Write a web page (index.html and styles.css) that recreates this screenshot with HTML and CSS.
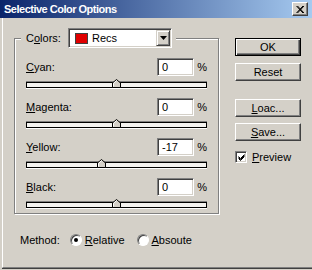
FILE: index.html
```html
<!DOCTYPE html>
<html lang="en">
<head>
    <meta charset="UTF-8">
    <meta name="viewport" content="width=device-width, initial-scale=1.0">
    <title>Selective Color Options</title>
    <link rel="stylesheet" href="styles.css">
</head>
<body>
    <div class="window">
        <div class="titlebar">
            <span class="title">Selective Color Options</span>
            <span class="close">
                <svg width="8" height="7" viewBox="0 0 8 7"><path d="M0.5 0 L7 7 M1.5 0 L8 7 M7 0 L0.5 7 M8 0 L1.5 7" stroke="#000" stroke-width="1"/></svg>
            </span>
        </div>
        <div class="content">
            <div class="main">
                <fieldset class="group">
                    <legend class="colors">
                        <span class="colors-lbl">C<u>o</u>lors:</span>
                        <span class="select">
                            <span class="swatch"></span>
                            <span class="sel-text">Recs</span>
                            <span class="arrow"><svg width="7" height="4" viewBox="0 0 7 4"><path d="M0 0 H7 L3.5 4 Z" fill="#000"/></svg></span>
                        </span>
                    </legend>

                    <div class="row">
                        <div class="row-top"><span class="lbl"><u>C</u>yan:</span><input class="num" type="text" value="0" readonly><span class="pct">%</span></div>
                        <div class="track"><span class="thumb" style="left: 85px"><svg width="9" height="9" viewBox="0 0 9 9"><path d="M0.5 8.5 V4 L4.5 0.5 L8.5 4 V8.5 Z" fill="#d4d0c8" stroke="#000"/><path d="M1.5 7.5 V4.3 L4.5 1.7" fill="none" stroke="#fff"/></svg></span></div>
                    </div>
                    <div class="row">
                        <div class="row-top"><span class="lbl"><u>M</u>agenta:</span><input class="num" type="text" value="0" readonly><span class="pct">%</span></div>
                        <div class="track"><span class="thumb" style="left: 85px"><svg width="9" height="9" viewBox="0 0 9 9"><path d="M0.5 8.5 V4 L4.5 0.5 L8.5 4 V8.5 Z" fill="#d4d0c8" stroke="#000"/><path d="M1.5 7.5 V4.3 L4.5 1.7" fill="none" stroke="#fff"/></svg></span></div>
                    </div>
                    <div class="row">
                        <div class="row-top"><span class="lbl"><u>Y</u>ellow:</span><input class="num" type="text" value="-17" readonly><span class="pct">%</span></div>
                        <div class="track"><span class="thumb" style="left: 70px"><svg width="9" height="9" viewBox="0 0 9 9"><path d="M0.5 8.5 V4 L4.5 0.5 L8.5 4 V8.5 Z" fill="#d4d0c8" stroke="#000"/><path d="M1.5 7.5 V4.3 L4.5 1.7" fill="none" stroke="#fff"/></svg></span></div>
                    </div>
                    <div class="row">
                        <div class="row-top"><span class="lbl"><u>B</u>lack:</span><input class="num" type="text" value="0" readonly><span class="pct">%</span></div>
                        <div class="track"><span class="thumb" style="left: 85px"><svg width="9" height="9" viewBox="0 0 9 9"><path d="M0.5 8.5 V4 L4.5 0.5 L8.5 4 V8.5 Z" fill="#d4d0c8" stroke="#000"/><path d="M1.5 7.5 V4.3 L4.5 1.7" fill="none" stroke="#fff"/></svg></span></div>
                    </div>
                </fieldset>

                <div class="method">
                    <span class="method-lbl">Method:</span>
                    <span class="radio checked"></span><span class="radio-text"><u>R</u>elative</span>
                    <span class="radio"></span><span class="radio-text"><u>A</u>bsoute</span>
                </div>
            </div>

            <div class="side">
                <button class="btn default">OK</button>
                <button class="btn reset">Reset</button>
                <button class="btn load"><u>L</u>oac...</button>
                <button class="btn save"><u>S</u>ave...</button>
                <div class="preview">
                    <span class="check"><svg width="7" height="7" viewBox="0 0 7 7"><path d="M0.5 2.5 L2.5 4.5 L6.5 0.5 M0.5 3.5 L2.5 5.5 L6.5 1.5 M0.5 4.5 L2.5 6.5 L6.5 2.5" fill="none" stroke="#000"/></svg></span>
                    <span><u>P</u>review</span>
                </div>
            </div>
        </div>
    </div>
</body>
</html>
```

FILE: styles.css
```css
* {
    box-sizing: border-box;
}
body {
    margin: 0;
    font-family: "Liberation Sans", Arial, sans-serif;
    font-size: 11px;
    color: #000;
    background: #d4d0c8;
}
u {
    text-decoration-thickness: 1px;
    text-underline-offset: 1px;
}
.window {
    width: 312px;
    height: 270px;
    background: #d4d0c8;
    overflow: hidden;
}
.titlebar {
    height: 18px;
    display: flex;
    align-items: center;
    justify-content: space-between;
    padding: 0 4px 0 4px;
    background: linear-gradient(to right, #0a246a 0%, #a6caf0 100%);
}
.title {
    color: #fff;
    font-weight: bold;
    letter-spacing: -0.5px;
}
.close {
    width: 16px;
    height: 14px;
    display: flex;
    align-items: center;
    justify-content: center;
    background: #d4d0c8;
    border: 1px solid;
    border-color: #fff #404040 #404040 #fff;
    box-shadow: inset -1px -1px 0 #808080;
}
.content {
    display: flex;
    height: 250px;
    margin-left: 2px;
    border-left: 1px solid #fff;
    border-bottom: 1px solid #808080;
    box-shadow: 0 1px 0 #404040;
}
.main {
    width: 216px;
    padding-left: 11px;
}
.group {
    width: 205px;
    margin: 10px 0 0;
    padding: 10px 11px 5px;
    border: 1px solid #808080;
    box-shadow: inset 1px 1px 0 #fff, 1px 1px 0 #fff;
    min-width: 0;
}
.colors {
    display: flex;
    align-items: center;
    height: 20px;
    margin-left: -5px;
    padding: 0 4px 0 5px;
    background: #d4d0c8;
}
.colors-lbl {
    width: 42px;
}
.select {
    display: flex;
    align-items: center;
    width: 104px;
    height: 20px;
    padding-left: 6px;
    background: #fff;
    border: 1px solid;
    border-color: #808080 #fff #fff #808080;
    box-shadow: inset 1px 1px 0 #404040, inset -1px -1px 0 #d4d0c8;
}
.swatch {
    width: 13px;
    height: 11px;
    background: #e00000;
    border: 1px solid #404040;
}
.sel-text {
    margin-left: 4px;
}
.arrow {
    margin-left: auto;
    margin-right: 1px;
    width: 14px;
    height: 16px;
    display: flex;
    align-items: center;
    justify-content: center;
    background: #d4d0c8;
    border: 1px solid;
    border-color: #d4d0c8 #404040 #404040 #d4d0c8;
    box-shadow: inset 1px 1px 0 #fff, inset -1px -1px 0 #808080;
}
.row {
    margin-bottom: 10px;
}
.row:last-child {
    margin-bottom: 0;
}
.row-top {
    display: flex;
    align-items: center;
    height: 18px;
}
.lbl {
    flex: 1;
}
.num {
    width: 37px;
    height: 18px;
    padding: 0 0 0 4px;
    font: inherit;
    color: #000;
    background: #fff;
    border: 1px solid;
    border-color: #808080 #fff #fff #808080;
    box-shadow: inset 1px 1px 0 #404040, inset -1px -1px 0 #d4d0c8;
    outline: none;
}
.pct {
    width: 13px;
    text-align: right;
}
.track {
    position: relative;
    height: 6px;
    margin-top: 6px;
    background: #f4f3f0;
    border: 1px solid #000;
    box-shadow: 0 -1px 0 #808080, 0 1px 0 #fff;
}
.thumb {
    position: absolute;
    top: -4px;
    width: 9px;
    height: 9px;
    line-height: 0;
}
.method {
    display: flex;
    align-items: center;
    height: 16px;
    margin-top: 18px;
    padding-left: 6px;
}
.method-lbl {
    margin-right: 10px;
}
.radio {
    position: relative;
    width: 12px;
    height: 12px;
    margin-right: 3px;
    border-radius: 50%;
    background: #fff;
    border: 1px solid;
    border-color: #808080 #fff #fff #808080;
    box-shadow: inset 1px 1px 0 #404040;
}
.radio.checked::after {
    content: "";
    position: absolute;
    left: 3px;
    top: 3px;
    width: 4px;
    height: 4px;
    border-radius: 50%;
    background: #000;
}
.radio-text {
    margin-right: 12px;
}
.side {
    margin-left: 16px;
    padding-top: 20px;
}
.btn {
    display: block;
    width: 66px;
    height: 18px;
    padding: 0;
    font: inherit;
    color: #000;
    background: #d4d0c8;
    border: 1px solid;
    border-color: #fff #404040 #404040 #fff;
    box-shadow: inset -1px -1px 0 #808080;
}
.btn.default {
    border: 1px solid #000;
    box-shadow: inset 1px 1px 0 #fff, inset -1px -1px 0 #404040, inset -2px -2px 0 #808080;
}
.reset {
    margin-top: 7px;
}
.load {
    margin-top: 18px;
}
.save {
    margin-top: 6px;
}
.preview {
    display: flex;
    align-items: center;
    margin-top: 10px;
}
.check {
    width: 12px;
    height: 12px;
    margin-right: 5px;
    display: flex;
    align-items: center;
    justify-content: center;
    background: #fff;
    border: 1px solid;
    border-color: #808080 #fff #fff #808080;
    box-shadow: inset 1px 1px 0 #404040, inset -1px -1px 0 #d4d0c8;
}
```
